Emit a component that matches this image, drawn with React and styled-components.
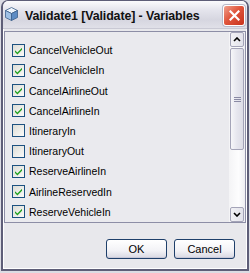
import React from 'react'
import styled, { createGlobalStyle } from 'styled-components'

const GlobalStyle = createGlobalStyle`
  html, body {
    margin: 0;
    padding: 0;
    background: #dcdce4;
  }
`;

const Window = styled.div`
  box-sizing: border-box;
  margin-left: 1px;
  width: 248px;
  height: 271px;
  display: flex;
  flex-direction: column;
  border: 2px solid #5e5e78;
  border-top-width: 1px;
  border-radius: 7px 7px 0 0;
  background: #e8e8ec;
  overflow: hidden;
  font-family: "Liberation Sans", Arial, sans-serif;
`;

const TitleBar = styled.div`
  height: 27px;
  flex: none;
  display: flex;
  align-items: center;
  padding: 0 2px 0 2px;
  background: linear-gradient(#fbfbfd 0%, #e4e4ec 35%, #d6d6e0 70%, #e0e0e8 100%);
  border-bottom: 1px solid #c9c9d4;
`;

const AppIcon = styled.svg`
  flex: none;
  margin: -2px 7px 0 0;
`;

const Title = styled.div`
  font-size: 12.4px;
  font-weight: bold;
  color: #111;
  white-space: nowrap;
  letter-spacing: -0.1px;
  margin-top: 2px;
`;

const CloseButton = styled.div`
  margin-left: auto;
  margin-top: 2px;
  width: 20px;
  height: 19px;
  border: 1px solid #fff;
  border-radius: 3px;
  background: linear-gradient(135deg, #f0a08c 0%, #e0553c 45%, #c8321c 100%);
  box-shadow: 0 0 0 1px #b8b8c8;
  display: flex;
  align-items: center;
  justify-content: center;
`;

const Body = styled.div`
  flex: 1;
  display: flex;
  flex-direction: column;
  padding: 2px 1px 0 1px;
  box-shadow: inset 1px 0 0 #fff, inset -1px 0 0 #fff, inset 0 -1px 0 #fff;
`;

const ListBox = styled.div`
  box-sizing: border-box;
  height: 192px;
  display: flex;
  border: 1px solid #8d8ea6;
  background: #eaeaee;
`;

const Items = styled.div`
  flex: 1;
  display: flex;
  flex-direction: column;
  padding: 8px 0 0 7px;
`;

const Row = styled.label`
  height: 20.5px;
  display: flex;
  align-items: center;
  gap: 4px;
  font-size: 10.5px;
  color: #000;
`;

const Box = styled.span`
  box-sizing: border-box;
  width: 13px;
  height: 13px;
  border: 1px solid #1c5180;
  background: linear-gradient(135deg, #dcdcd6 0%, #fbfbf9 100%);
  display: flex;
  align-items: center;
  justify-content: center;
`;

const ScrollBar = styled.div`
  width: 16px;
  display: flex;
  flex-direction: column;
  background: linear-gradient(90deg, #f4f4f6, #fdfdfe 60%, #eeeef2);
`;

const ArrowButton = styled.div`
  box-sizing: border-box;
  margin: 0 1px;
  height: 15px;
  border: 1px solid #a4a4b8;
  border-radius: 2px;
  background: linear-gradient(90deg, #f2f2f6, #e2e2ea);
  display: flex;
  align-items: center;
  justify-content: center;
`;

const Thumb = styled.div`
  box-sizing: border-box;
  margin: 1px 1px 0;
  height: 102px;
  border: 1px solid #a4a4b8;
  border-radius: 2px;
  background: linear-gradient(90deg, #f6f6f9, #e6e6ee 50%, #dcdce6);
  display: flex;
  align-items: center;
  justify-content: center;
`;

const Track = styled.div`
  flex: 1;
`;

const Footer = styled.div`
  flex: 1;
  display: flex;
  justify-content: flex-end;
  align-items: flex-start;
  gap: 7px;
  padding: 16px 11px 0 0;
`;

const Button = styled.button`
  box-sizing: border-box;
  width: 61px;
  height: 20px;
  padding: 0;
  border: 1px solid #1e3f6a;
  border-radius: 3px;
  background: linear-gradient(#ffffff 0%, #f2f2f6 60%, #d8d8e2 100%);
  box-shadow: inset 0 -1px 0 #c8c8d8;
  font-family: "Liberation Sans", Arial, sans-serif;
  font-size: 11px;
  color: #000;
`;

const items = [
  ['CancelVehicleOut', true],
  ['CancelVehicleIn', true],
  ['CancelAirlineOut', true],
  ['CancelAirlineIn', true],
  ['ItineraryIn', false],
  ['ItineraryOut', false],
  ['ReserveAirlineIn', true],
  ['AirlineReservedIn', true],
  ['ReserveVehicleIn', true],
]

function Check({ on }) {
  return (
    <Box>
      {on && (
        <svg width="9" height="9" viewBox="0 0 9 9">
          <path d="M1 4.2 L3.4 6.6 L8 1.8 L8 3.8 L3.4 8.4 L1 6 Z" fill="#21a121" />
        </svg>
      )}
    </Box>
  )
}

function Cube() {
  return (
    <AppIcon width="13" height="14" viewBox="0 0 13 14">
      <path d="M6.5 0.5 L12.5 3.5 L6.5 6.5 L0.5 3.5 Z" fill="#eef4fb" stroke="#3c5f8c" strokeWidth="0.8" />
      <path d="M0.5 3.5 L6.5 6.5 L6.5 13.5 L0.5 10.5 Z" fill="#9fc0e4" stroke="#3c5f8c" strokeWidth="0.8" />
      <path d="M12.5 3.5 L6.5 6.5 L6.5 13.5 L12.5 10.5 Z" fill="#5d8cc4" stroke="#3c5f8c" strokeWidth="0.8" />
    </AppIcon>
  )
}

export default function App() {
  return (
    <>
      <GlobalStyle />
      <Window>
        <TitleBar>
          <Cube />
          <Title>Validate1 [Validate] - Variables</Title>
          <CloseButton>
            <svg width="11" height="11" viewBox="0 0 11 11">
              <path d="M1.5 1.5 L9.5 9.5 M9.5 1.5 L1.5 9.5" stroke="#fff" strokeWidth="2.2" strokeLinecap="square" />
            </svg>
          </CloseButton>
        </TitleBar>
        <Body>
          <ListBox>
            <Items>
              {items.map(([name, on]) => (
                <Row key={name}>
                  <Check on={on} />
                  {name}
                </Row>
              ))}
            </Items>
            <ScrollBar>
              <ArrowButton>
                <svg width="8" height="5" viewBox="0 0 8 5">
                  <path d="M1 4 L4 1 L7 4" fill="none" stroke="#000" strokeWidth="1.6" />
                </svg>
              </ArrowButton>
              <Thumb>
                <svg width="7" height="7" viewBox="0 0 7 7">
                  <path d="M0 1.5 H7 M0 3.5 H7 M0 5.5 H7" stroke="#8a8aa4" strokeWidth="1" />
                </svg>
              </Thumb>
              <Track />
              <ArrowButton>
                <svg width="8" height="5" viewBox="0 0 8 5">
                  <path d="M1 1 L4 4 L7 1" fill="none" stroke="#000" strokeWidth="1.6" />
                </svg>
              </ArrowButton>
            </ScrollBar>
          </ListBox>
          <Footer>
            <Button>OK</Button>
            <Button>Cancel</Button>
          </Footer>
        </Body>
      </Window>
    </>
  )
}
